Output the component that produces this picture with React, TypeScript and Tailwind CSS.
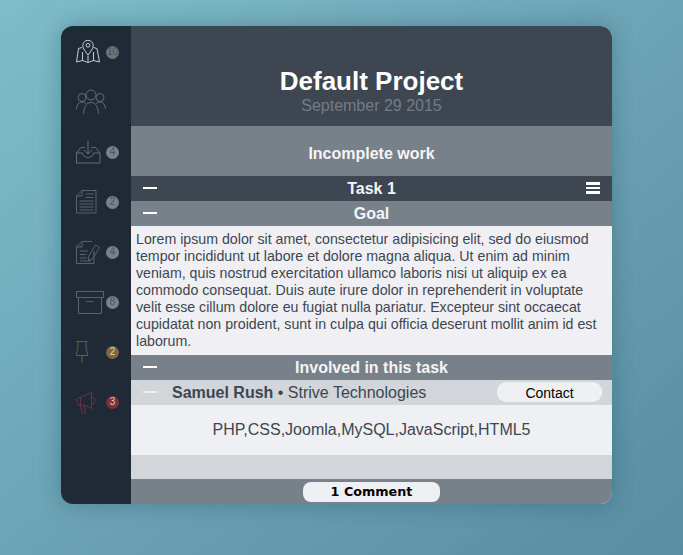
import React from 'react'

const MapIcon = () => (
  <svg width="26" height="26" viewBox="0 0 26 26" fill="none" stroke="currentColor" strokeWidth="1">
    <path d="M6 8.500 L2.500 9.500 L0.500 23 L6.500 21.500 L12 23.500 L17.500 21.500 L23.500 23 L21 9.500 L17.500 8.500" />
    <path d="M12 16 C9 12 6.800 9.500 6.800 6.500 A5.200 5.200 0 0 1 17.200 6.500 C17.200 9.500 15 12 12 16 Z" />
    <circle cx="12" cy="6.300" r="1.900" />
    <path d="M6.500 13 V21.500 M17.500 13 V21.500 M12 16.500 V23.500" />
  </svg>
)

const TeamIcon = () => (
  <svg width="30" height="26" viewBox="0 0 30 26" fill="none" stroke="currentColor" strokeWidth="1">
    <circle cx="15" cy="6" r="5" />
    <circle cx="6" cy="8.500" r="4" />
    <circle cx="24" cy="8.500" r="4" />
    <path d="M7.500 25 C8 17.500 10.500 13.500 15 13.500 C19.500 13.500 22 17.500 22.500 25" />
    <path d="M0.500 20 C1 15.500 3 13 6 13 C7.500 13 8.800 13.500 10 14.500" />
    <path d="M29.500 20 C29 15.500 27 13 24 13 C22.500 13 21.200 13.500 20 14.500" />
  </svg>
)

const InboxIcon = () => (
  <svg width="26" height="26" viewBox="0 0 26 26" fill="none" stroke="currentColor" strokeWidth="1">
    <path d="M0.500 14 V24 H24 V14 L19.500 8.500 H15.500 M8.500 8.500 H5 L0.500 14" />
    <path d="M0.500 14 H6.500 C7 17 9 18.500 12 18.500 C15 18.500 17 17 17.500 14 H24" />
    <path d="M12 2 V15 M8 11 L12 15 L16 11" />
  </svg>
)

const DocIcon = () => (
  <svg width="26" height="26" viewBox="0 0 26 26" fill="none" stroke="currentColor" strokeWidth="1">
    <path d="M6 1.500 H20 V24 H0.500 V7 Z M6 1.500 V7 H0.500" />
    <path d="M9.500 5 H17.500 M9.500 8.500 H17.500 M3.500 12 H17.500 M3.500 15 H17.500 M3.500 18 H17.500 M3.500 21 H17.500" />
  </svg>
)

const EditIcon = () => (
  <svg width="26" height="26" viewBox="0 0 26 26" fill="none" stroke="currentColor" strokeWidth="1">
    <path d="M6 2.500 H16 M18 12 V24.500 H0.500 V8 L6 2.500 V8 H0.500" />
    <path d="M4 12 H12 M4 15.500 H10 M4 19 H11 M4 22 H15" />
    <path d="M12.500 17.500 L19.500 6 L23.500 8.500 L16.500 20 L12.500 21.500 Z" />
  </svg>
)

const BoxIcon = () => (
  <svg width="28" height="24" viewBox="0 0 28 24" fill="none" stroke="currentColor" strokeWidth="1">
    <rect x="0.500" y="1.500" width="27" height="6" />
    <path d="M2.500 7.500 V23.500 H25.500 V7.500" />
    <path d="M10.500 11.500 H17.500" />
  </svg>
)

const PinIcon = () => (
  <svg width="26" height="26" viewBox="0 0 26 26" fill="none" stroke="currentColor" strokeWidth="1">
    <path d="M0.500 2.500 H11.500 M2 2.500 V9 L0 16.500 H12 L10 9 V2.500" />
    <path d="M6 16.500 V24" />
  </svg>
)

const MegaphoneIcon = () => (
  <svg width="26" height="26" viewBox="0 0 26 26" fill="none" stroke="currentColor" strokeWidth="1">
    <path d="M0.500 10 L15.500 3.500 V19.500 L8 16 H2 Z" />
    <path d="M15.500 8 C18 8.500 19.500 9.800 19.500 11.500 C19.500 13.200 18 14.500 15.500 15" />
    <path d="M4 16 L6.500 24 H9.500 L8 16" />
    <path d="M4.500 9 V16" />
  </svg>
)

const navItems = [
  { icon: <MapIcon />, badge: '10', color: 'text-[#c8ccd0]', badgeClass: 'bg-[#6f747b] text-[#4b5058]' },
  { icon: <TeamIcon />, badge: '', color: 'text-[#626c77]', badgeClass: '' },
  { icon: <InboxIcon />, badge: '4', color: 'text-[#626c77]', badgeClass: 'bg-[#7b8089] text-[#4f545c]' },
  { icon: <DocIcon />, badge: '2', color: 'text-[#59636f]', badgeClass: 'bg-[#7b8089] text-[#4f545c]' },
  { icon: <EditIcon />, badge: '4', color: 'text-[#59636f]', badgeClass: 'bg-[#7b8089] text-[#4f545c]' },
  { icon: <BoxIcon />, badge: '8', color: 'text-[#59636f]', badgeClass: 'bg-[#7b8089] text-[#4f545c]' },
  { icon: <PinIcon />, badge: '2', color: 'text-[#6a5c42]', badgeClass: 'bg-[#80673f] text-[#d8d2c6]' },
  { icon: <MegaphoneIcon />, badge: '3', color: 'text-[#6a3346]', badgeClass: 'bg-[#7e3237] text-[#dcc9cb]' },
]

const Bar = ({ title, dark, menu }: { title: string; dark?: boolean; menu?: boolean }) => (
  <div className={`relative flex h-[25px] items-center justify-center text-base leading-none font-bold text-[#f4f5f7] ${dark ? 'bg-[#3d4651]' : 'bg-[#78808a]'}`}>
    <span className="absolute top-[11px] left-[12px] h-[2px] w-[14px] bg-white" />
    {title}
    {menu && (
      <span className="absolute top-[6px] right-[12px] flex w-[14px] flex-col gap-[1.500px]">
        <span className="h-[3px] bg-white" />
        <span className="h-[2.500px] bg-white" />
        <span className="h-[3px] bg-white" />
      </span>
    )}
  </div>
)

const App = () => {
  return (
    <div className="h-[555px] w-[683px] overflow-hidden bg-gradient-to-br from-[#7fbcc9] to-[#588da2] pt-[26px] pl-[61px] font-['Liberation_Sans',sans-serif]">
      <div className="flex h-[478px] w-[551px] overflow-hidden rounded-[12px] shadow-[0_0_22px_rgba(20,50,70,0.3)]">
        <div className="w-[70px] shrink-0 bg-[#1f2a36]">
          {navItems.map((item, i) => (
            <div key={i} className="flex h-[50px] items-center pt-[2px] pl-[15px]">
              <div className={`flex w-[30px] ${item.color}`}>{item.icon}</div>
              {item.badge && (
                <span className={`flex h-[13px] w-[13px] items-center justify-center rounded-full text-[10px] leading-none ${item.badgeClass}`}>
                  {item.badge}
                </span>
              )}
            </div>
          ))}
        </div>

        <div className="min-w-0 flex-1 bg-[#f0f0f4]">
          <div className="h-[100px] bg-[#3d4651] pt-[39px] text-center">
            <h1 className="text-[26px] leading-[32px] font-bold text-white">Default Project</h1>
            <p className="text-base leading-[18px] text-[#757c86]">September 29 2015</p>
          </div>
          <div className="flex h-[50px] items-center justify-center bg-[#78808a] pt-[6px] text-base font-bold text-[#f4f5f7]">
            Incomplete work
          </div>
          <Bar title="Task 1" dark menu />
          <Bar title="Goal" />
          <p className="h-[129px] pt-[5px] pr-[10px] pl-[5px] text-[14.200px] leading-[17px] text-[#3d4651]">
            Lorem ipsum dolor sit amet, consectetur adipisicing elit, sed do eiusmod tempor incididunt ut labore et dolore magna aliqua. Ut enim ad minim veniam, quis nostrud exercitation ullamco laboris nisi ut aliquip ex ea commodo consequat. Duis aute irure dolor in reprehenderit in voluptate velit esse cillum dolore eu fugiat nulla pariatur. Excepteur sint occaecat cupidatat non proident, sunt in culpa qui officia deserunt mollit anim id est laborum.
          </p>
          <Bar title="Involved in this task" />
          <div className="relative flex h-[25px] items-center bg-[#d2d5d9] pl-[41px] text-base text-[#3d4651]">
            <span className="absolute top-[11px] left-[12px] h-[2px] w-[14px] bg-[#eceef0]" />
            <span><b>Samuel Rush</b> • Strive Technologies</span>
            <button className="absolute top-[2px] right-[10px] h-[20px] w-[105px] rounded-[9px] bg-[#eff0f2] pt-[1px] text-sm text-black">Contact</button>
          </div>
          <div className="flex h-[50px] items-center justify-center bg-[#eff0f3] text-base text-[#3d4651]">
            PHP,CSS,Joomla,MySQL,JavaScript,HTML5
          </div>
          <div className="h-[24px] bg-[#d2d5d9]" />
          <div className="flex h-[25px] justify-center bg-[#78808a] pt-[3px]">
            <button className="h-[20px] w-[137px] rounded-[8px] bg-[#eff0f3] pt-[1px] font-['DejaVu_Sans',sans-serif] text-[12.750px] leading-none font-bold text-black">1 Comment</button>
          </div>
        </div>
      </div>
    </div>
  )
}

export default App
